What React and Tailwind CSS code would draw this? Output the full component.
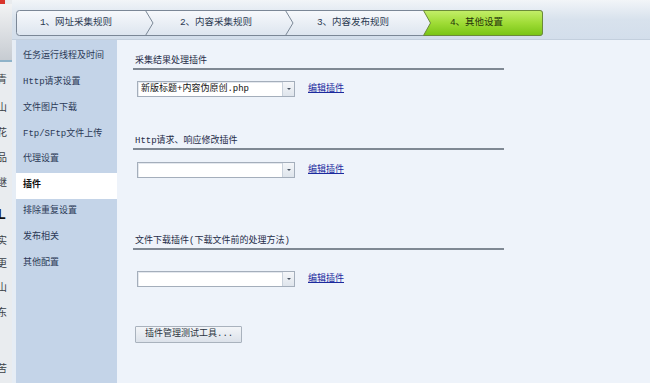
import React from 'react';

const FONT = "font-['Liberation_Mono','Noto_Sans_CJK_SC',monospace]";

const navItems = [
  '任务运行线程及时间',
  'Http请求设置',
  '文件图片下载',
  'Ftp/SFtp文件上传',
  '代理设置',
  '插件',
  '排除重复设置',
  '发布相关',
  '其他配置',
];

// cut-off characters from the window behind
const stripChars = [
  { ch: '青', y: 73 },
  { ch: '山', y: 101 },
  { ch: '花', y: 126 },
  { ch: '品', y: 151 },
  { ch: '继', y: 176 },
  { ch: 'L', y: 205, big: true },
  { ch: '实', y: 234 },
  { ch: '更', y: 257 },
  { ch: '山', y: 281 },
  { ch: '东', y: 306 },
  { ch: '苦', y: 362 },
];

function Steps() {
  return (
    <div className="relative w-[528px] h-[26px]">
      <svg width="528" height="26" viewBox="0 0 528 26" className="block">
        <defs>
          <linearGradient id="stepGrey" x1="0" y1="0" x2="0" y2="1">
            <stop offset="0" stopColor="#f7f9fc" />
            <stop offset="1" stopColor="#dde5ef" />
          </linearGradient>
          <linearGradient id="stepGreen" x1="0" y1="0" x2="0" y2="1">
            <stop offset="0" stopColor="#c4ee6a" />
            <stop offset="0.5" stopColor="#9fdc36" />
            <stop offset="1" stopColor="#78c414" />
          </linearGradient>
        </defs>
        <rect x="0.5" y="0.5" width="526" height="25" rx="3" fill="url(#stepGrey)" stroke="#7b8796" />
        <path d="M407.5 0.5 L414.5 13 L407.5 25.5 L524 25.5 Q526.5 25.5 526.5 23 L526.5 3 Q526.5 0.5 524 0.5 Z" fill="url(#stepGreen)" stroke="#6b8a3a" />
        <path d="M129.5 0.5 L137 13 L129.5 25.5" fill="none" stroke="#7b8796" />
        <path d="M269.5 0.5 L277 13 L269.5 25.5" fill="none" stroke="#7b8796" />
      </svg>
      <div className={`absolute inset-0 flex items-center text-[9.5px] text-[#2b3a52] ${FONT}`}>
        <span className="w-[120px] text-center">1、网址采集规则</span>
        <span className="w-[160px] text-center">2、内容采集规则</span>
        <span className="w-[114px] text-center">3、内容发布规则</span>
        <span className="w-[133px] text-center text-[#26350c]">4、其他设置</span>
      </div>
    </div>
  );
}

function Select({ value }) {
  return (
    <div className="ml-[4px] flex w-[158px] h-[16px] border border-[#a4aebb] bg-white shadow-[inset_1px_1px_0_#e4e8ee]">
      <div className="flex-1 pl-[3px] flex items-center text-[9px] text-[#111] leading-none">{value}</div>
      <div className="w-[12px] h-full border-l border-[#c9d1db] bg-gradient-to-b from-[#f4f6f9] to-[#dfe5ec] flex items-center justify-center">
        <span className="block w-0 h-0 border-l-[2px] border-r-[2px] border-t-[2px] border-l-transparent border-r-transparent border-t-[#4a5563]" />
      </div>
    </div>
  );
}

function EditLink() {
  return (
    <span className="ml-[13px] text-[9px] text-[#1b2a9e] underline leading-none">编辑插件</span>
  );
}

function Header({ children, className = '' }) {
  return (
    <div className={`w-[371px] pl-[2px] pb-[1px] border-b-2 border-[#7f8893] text-[9px] leading-[12px] text-[#1f2c48] ${className}`}>
      {children}
    </div>
  );
}

export default function App() {
  return (
    <div className={`w-[650px] h-[383px] overflow-hidden flex bg-[#eef3f9] ${FONT}`}>
      {/* background window strip */}
      <div className="relative w-[12px] h-full bg-[#e9ecef] flex flex-col overflow-hidden">
        <div className="w-[5px] h-[4px] bg-[#d9352b]" />
        <div className="h-[56px] bg-gradient-to-b from-[#f2f3f4] to-[#c7ccd2]" />
        <div className="h-[2px] bg-[#8fb3c9]" />
        {stripChars.map((c, i) => (
          <div
            key={i}
            className={`absolute left-[-3px] ${c.big ? 'text-[15px] font-bold text-[#111]' : 'text-[10px] text-[#3a3f46]'}`}
            style={{ top: c.y }}
          >
            {c.ch}
          </div>
        ))}
      </div>

      {/* main window */}
      <div className="flex-1 flex flex-col">
        <div className="h-[40px] bg-gradient-to-b from-[#f2f5f8] via-[#d8e2ed] to-[#d3deeb] pl-[4px] pt-[10px] border-b border-[#c3cfdd]">
          <Steps />
        </div>

        <div className="flex-1 flex pl-[4px] bg-[#e6edf5]">
          {/* nav */}
          <div className="w-[101px] bg-[#c4d4e8] pt-[4px]">
            {navItems.map((item) => (
              <div
                key={item}
                className={`h-[25.8px] pl-[7px] flex items-center text-[9px] ${
                  item === '插件' ? 'bg-white font-bold text-[#111]' : 'text-[#2b3956]'
                }`}
              >
                {item}
              </div>
            ))}
          </div>

          {/* content */}
          <div className="flex-1 bg-[#eef3fa] pl-[16px] flex flex-col">
            <Header className="mt-[15px]">采集结果处理插件</Header>
            <div className="mt-[11px] flex items-center">
              <Select value="新版标题+内容伪原创.php" />
              <EditLink />
            </div>

            <Header className="mt-[38px]">Http请求、响应修改插件</Header>
            <div className="mt-[12px] flex items-center">
              <Select value="" />
              <EditLink />
            </div>

            <Header className="mt-[57px]">文件下载插件(下载文件前的处理方法)</Header>
            <div className="mt-[21px] flex items-center">
              <Select value="" />
              <EditLink />
            </div>

            <div className="mt-[39px] ml-[2px] w-[107px] h-[17px] border border-[#a9b2bd] rounded-[1px] bg-gradient-to-b from-[#f3f5f8] to-[#dce2ea] pl-[9px] flex items-center text-[9px] text-[#2a3440]">
              插件管理测试工具...
            </div>
          </div>
        </div>
      </div>
    </div>
  );
}
